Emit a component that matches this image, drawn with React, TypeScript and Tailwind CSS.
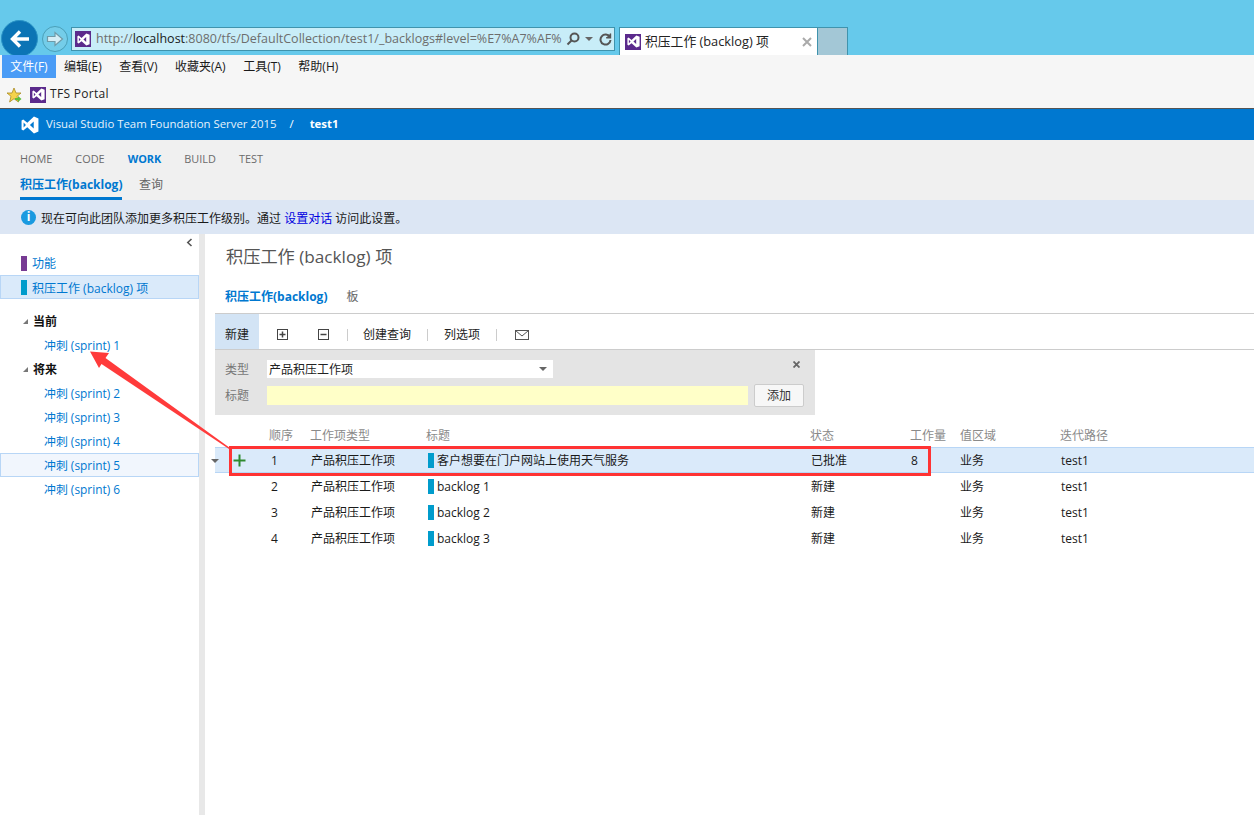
import React from "react";

const font = { fontFamily: '"Open Sans","Noto Sans CJK SC",sans-serif' };

function VsLogo({ color = "#fff", size = 16 }: { color?: string; size?: number }) {
  return (
    <svg width={size} height={size} viewBox="0 0 16 16" className="shrink-0">
      <path
        fill={color}
        fillRule="evenodd"
        d="M11.5 0.5 L15.5 2.2 V13.8 L11.5 15.5 L5.6 10 L2 12.8 L0.5 12 V4 L2 3.2 L5.6 6 Z M11.3 4.8 L7.9 8 L11.3 11.2 Z M2.3 5.8 V10.2 L4.4 8 Z"
      />
    </svg>
  );
}

function VsBadge() {
  return (
    <div className="w-[16px] h-[16px] bg-[#5b2a8c] flex items-center justify-center shrink-0">
      <VsLogo size={13} />
    </div>
  );
}

function Caret({ className = "" }: { className?: string }) {
  return <div className={"w-0 h-0 border-x-[4px] border-x-transparent border-t-[4px] border-t-[#666] " + className} />;
}

function BrowserBar() {
  return (
    <div className="h-[55px] bg-[#66c9eb] flex items-end pl-[1px] overflow-hidden">
      <div className="w-[37px] h-[35px] overflow-hidden shrink-0">
        <div className="w-[37px] h-[37px] rounded-full bg-[#0b74b5] border border-[#2a93c5] flex items-center justify-center">
          <svg width="24" height="24" viewBox="0 0 24 24" fill="none" stroke="#fff" strokeWidth="3.4">
            <path d="M21 12H5M12 4.5L4.5 12L12 19.5" />
          </svg>
        </div>
      </div>
      <div className="w-[26px] h-[26px] rounded-full border border-[#4a9fb8] bg-[#74cde9] flex items-center justify-center ml-[4px] mb-[3px] shrink-0">
        <svg width="20" height="20" viewBox="0 0 20 20">
          <path d="M2.5 7.5H10V3.5L17.5 10L10 16.5V12.5H2.5Z" stroke="#6f9aa8" strokeWidth="1.2" fill="#d5eef6" />
        </svg>
      </div>
      <div className="w-[544px] h-[24px] ml-[3px] mb-[4px] bg-[#c8edf8] border border-[#3f93ad] flex items-center pl-[3px] shrink-0">
        <VsBadge />
        <div className="ml-[5px] w-[466px] overflow-hidden whitespace-nowrap text-[12.5px] text-[#6d6d6d] leading-[20px]">
          http://<span className="text-[#1a1a1a]">localhost</span>:8080/tfs/DefaultCollection/test1/_backlogs#level=%E7%A7%AF%
        </div>
        <svg width="14" height="14" viewBox="0 0 14 14" fill="none" stroke="#555" strokeWidth="2" className="ml-[4px]">
          <circle cx="8.5" cy="5.5" r="4" />
          <path d="M5.5 8.5L1.5 12.5" />
        </svg>
        <Caret className="ml-[5px]" />
        <svg width="13" height="13" viewBox="0 0 13 13" fill="none" stroke="#555" strokeWidth="2" className="ml-[6px]">
          <path d="M10.8 4A5 5 0 1 0 11.5 7" />
          <path d="M11.5 0.5V4.8H7.2" strokeWidth="1.4" fill="#555" />
        </svg>
      </div>
      <div className="w-[199px] h-[28px] ml-[4px] bg-white border-x border-t border-[#3f93ad] border-b-0 flex items-center pl-[5px] shrink-0">
        <VsBadge />
        <span className="ml-[4px] text-[12.8px] text-[#222] whitespace-nowrap">积压工作 (backlog) 项</span>
        <svg width="10" height="10" viewBox="0 0 10 10" stroke="#aaa" strokeWidth="2" className="ml-auto mr-[5px]">
          <path d="M1 1L9 9M9 1L1 9" />
        </svg>
      </div>
      <div className="w-[30px] h-[28px] bg-[#a3c7d6] border-y border-r border-[#3f93ad] border-b-0 shrink-0" />
    </div>
  );
}

function MenuBar() {
  const items = ["编辑(E)", "查看(V)", "收藏夹(A)", "工具(T)", "帮助(H)"];
  return (
    <div className="h-[26px] bg-[#f6f6f6] flex items-start pl-[2px] text-[12px] text-[#1a1a1a]">
      <div className="w-[54px] h-[23px] bg-[#4a9cf6] text-white flex items-center justify-center">文件(F)</div>
      <div className="flex items-center h-[23px] ml-[8px] gap-[17.5px]">
        {items.map((t) => (
          <span key={t} className="whitespace-nowrap">{t}</span>
        ))}
      </div>
    </div>
  );
}

function FavBar() {
  return (
    <div className="h-[27px] bg-[#f6f6f6] border-b border-[#555] flex items-center pl-[6px] box-content">
      <svg width="16" height="16" viewBox="0 0 16 16" className="shrink-0">
        <path d="M8 1L10 6H15L11 9.3L12.4 15L8 11.7L3.6 15L5 9.3L1 6H6Z" fill="#f4d34c" stroke="#a98a22" strokeWidth="0.8" />
        <path d="M9 11H12V9L15.5 12L12 15V13H9Z" fill="#5fbe3a" />
      </svg>
      <div className="ml-[8px]"><VsBadge /></div>
      <span className="ml-[4px] pb-[2px] text-[12px] text-[#222] tracking-[0.3px]">TFS Portal</span>
    </div>
  );
}

function TopBlue() {
  return (
    <div className="h-[31px] bg-[#0078d0] flex items-center pl-[21px] text-white text-[11.4px]">
      <VsLogo size={18} />
      <span className="ml-[7px] pb-[2px] text-[#e6f2fb]">Visual Studio Team Foundation Server 2015</span>
      <span className="ml-[13px] pb-[2px]">/</span>
      <span className="ml-[16px] pb-[2px] font-bold">test1</span>
    </div>
  );
}

function NavArea() {
  return (
    <div className="h-[60px] bg-[#f0f0f0] pl-[20px]">
      <div className="flex gap-[23px] pt-[11px] text-[10.9px] leading-[15px] text-[#6b6b6b]">
        <span>HOME</span>
        <span>CODE</span>
        <span className="font-bold text-[#0078d0]">WORK</span>
        <span>BUILD</span>
        <span>TEST</span>
      </div>
      <div className="flex mt-[10px] text-[12px] leading-[18px] items-start">
        <div className="w-[102px] h-[24px] border-b-[3px] border-[#0078d0] font-bold text-[#0078d0] whitespace-nowrap">积压工作(backlog)</div>
        <span className="ml-[17px] text-[#666]">查询</span>
      </div>
    </div>
  );
}

function InfoBar() {
  return (
    <div className="h-[34px] bg-[#dce6f4] flex items-center pl-[21px] text-[12px] text-[#1a1a1a]">
      <div className="w-[15px] h-[15px] rounded-full bg-[#1a9ae0] text-white flex items-center justify-center text-[12px] font-bold leading-none shrink-0">i</div>
      <span className="ml-[5px] pt-[3px] whitespace-nowrap">
        现在可向此团队添加更多积压工作级别。通过 <span className="text-[#0000e0]">设置对话</span> 访问此设置。
      </span>
    </div>
  );
}

function SprintRow({ n, hl }: { n: number; hl?: boolean }) {
  return (
    <div className={"h-[24px] flex items-center pl-[44px] text-[11.9px] text-[#0078d0] " + (hl ? "bg-[#f1f6fd] border border-[#b8d6f6]" : "")}>
      <span className={"pt-[2px] " + (hl ? "-ml-[1px]" : "")}>冲刺 (sprint) {n}</span>
    </div>
  );
}

function Group({ label }: { label: string }) {
  return (
    <div className="h-[24px] flex items-center pl-[23px] text-[12px] font-bold text-[#111]">
      <div className="w-0 h-0 border-l-[5px] border-l-transparent border-b-[5px] border-b-[#777] mr-[5px]" />
      <span className="pt-[2px]">{label}</span>
    </div>
  );
}

function Sidebar() {
  return (
    <div className="w-[205px] shrink-0 bg-white border-r-[6px] border-[#e8e8e8] flex flex-col">
      <div className="h-[17px] flex justify-end items-center pr-[6px]">
        <svg width="7" height="9" viewBox="0 0 7 9" fill="none" stroke="#555" strokeWidth="1.6"><path d="M5.5 1L1.8 4.5L5.5 8" /></svg>
      </div>
      <div className="h-[24px] flex items-center pl-[21px] text-[12px] text-[#0078d0]">
        <div className="w-[6px] h-[15px] bg-[#773b93] mr-[5px]" /><span className="pt-[2px]">功能</span>
      </div>
      <div className="h-[24px] flex items-center pl-[21px] text-[12px] text-[#0078d0] bg-[#daeafa] border border-[#b8d6f6]">
        <div className="w-[6px] h-[15px] bg-[#009ccc] mr-[5px] -ml-[1px]" /><span className="pt-[3px]">积压工作 (backlog) 项</span>
      </div>
      <div className="h-[10px]" />
      <Group label="当前" />
      <SprintRow n={1} />
      <Group label="将来" />
      {[2, 3, 4].map((n) => <SprintRow key={n} n={n} />)}
      <SprintRow n={5} hl />
      <SprintRow n={6} />
    </div>
  );
}

function Toolbar() {
  const Sep = () => <div className="w-px h-[12px] bg-[#ccc]" />;
  return (
    <div className="h-[37px] border-y border-[#ccc] flex items-center pt-[6px] text-[12px] text-[#222]">
      <div className="w-[44px] h-[35px] -mt-[6px] pt-[6px] bg-[#d3e4f5] flex items-center justify-center">新建</div>
      <svg width="11" height="11" viewBox="0 0 11 11" className="ml-[18px]" fill="none" stroke="#444"><rect x="0.5" y="0.5" width="10" height="10" /><path d="M2.5 5.5H8.5M5.5 2.5V8.5" strokeWidth="1.5" /></svg>
      <svg width="11" height="11" viewBox="0 0 11 11" className="ml-[30px]" fill="none" stroke="#444"><rect x="0.5" y="0.5" width="10" height="10" /><path d="M2.5 5.5H8.5" strokeWidth="1.5" /></svg>
      <div className="ml-[18px]"><Sep /></div>
      <span className="ml-[15px]">创建查询</span>
      <div className="ml-[16px]"><Sep /></div>
      <span className="ml-[16px]">列选项</span>
      <div className="ml-[16px]"><Sep /></div>
      <svg width="14" height="10" viewBox="0 0 14 10" className="ml-[18px]" fill="none" stroke="#555"><rect x="0.5" y="0.5" width="13" height="9" /><path d="M0.5 0.5L7 6L13.5 0.5" /></svg>
    </div>
  );
}

function AddForm() {
  return (
    <div className="w-[600px] h-[65px] bg-[#e4e4e4] relative text-[12px]">
      <div className="flex items-center h-[18px] absolute left-[10px] top-[10px]">
        <span className="w-[42px] text-[#777] pt-[2px]">类型</span>
        <div className="w-[286px] h-[18px] bg-white flex items-center pl-[3px] text-[#222]">
          <span className="pt-[2px] -ml-[1px]">产品积压工作项</span>
          <Caret className="ml-auto mr-[6px]" />
        </div>
      </div>
      <svg width="7" height="7" viewBox="0 0 7 7" stroke="#666" strokeWidth="1.8" className="absolute left-[578px] top-[11px]"><path d="M0.5 0.5L6.5 6.5M6.5 0.5L0.5 6.5" /></svg>
      <div className="flex items-center absolute left-[10px] top-[34px]">
        <span className="w-[42px] text-[#777]">标题</span>
        <div className="w-[481px] h-[19px] bg-[#ffffc8]" />
        <div className="w-[50px] h-[23px] ml-[6px] bg-[#f7f7f7] border border-[#ccc] rounded-[2px] flex items-center justify-center text-[#333]">添加</div>
      </div>
    </div>
  );
}

const cols = "grid grid-cols-[54px_41px_116px_384px_100px_50px_100px_1fr]";

function Row({ n, title, state, work, sel }: { n: number; title: string; state: string; work?: string; sel?: boolean }) {
  return (
    <div className={cols + " h-[26px] items-center text-[12px] text-[#1a1a1a] pt-[2px] " + (sel ? "bg-[#daeafa] border-y border-[#b8d6f6]" : "")}>
      <div />
      <div className="pl-[2px]">{n}</div>
      <div className="pl-[1px] whitespace-nowrap">产品积压工作项</div>
      <div className="flex items-center pl-[2px]">
        <div className="w-[6px] h-[15px] -mt-[2px] bg-[#009ccc] mr-[3px]" />
        {title}
      </div>
      <div className="pl-[1px]">{state}</div>
      <div className="pl-[1px]">{work}</div>
      <div>业务</div>
      <div className="pl-[1px]">test1</div>
    </div>
  );
}

function Main() {
  return (
    <div className="flex-1 bg-white pl-[10px] relative">
      <div className="pl-[11px] pt-[10px] text-[17.2px] leading-[26px] text-[#555] whitespace-nowrap">积压工作 (backlog) 项</div>
      <div className="flex items-center pl-[10px] mt-[17px] h-[20px] text-[12px]">
        <span className="font-bold text-[#0078d0] whitespace-nowrap">积压工作(backlog)</span>
        <span className="ml-[19px] text-[#666]">板</span>
      </div>
      <div className="h-[6px]" />
      <Toolbar />
      <AddForm />
      <div className={cols + " h-[32px] pt-[13px] text-[12px] leading-[16px] text-[#8a8a8a] items-start"}>
        <div />
        <div>顺序</div>
        <div>工作项类型</div>
        <div>标题</div>
        <div>状态</div>
        <div>工作量</div>
        <div>值区域</div>
        <div>迭代路径</div>
      </div>
      <Row n={1} title="客户想要在门户网站上使用天气服务" state="已批准" work="8" sel />
      <Row n={2} title="backlog 1" state="新建" />
      <Row n={3} title="backlog 2" state="新建" />
      <Row n={4} title="backlog 3" state="新建" />
      <Caret className="absolute left-[6px] top-[225px]" />
      <svg width="13" height="13" viewBox="0 0 13 13" className="absolute left-[28px] top-[220px]" stroke="#2f8a2f" strokeWidth="2"><path d="M6.5 0.5V12.5M0.5 6.5H12.5" /></svg>
    </div>
  );
}

export default function App() {
  return (
    <div className="w-[1254px] h-[815px] overflow-hidden relative bg-white flex flex-col" style={font}>
      <BrowserBar />
      <MenuBar />
      <FavBar />
      <TopBlue />
      <NavArea />
      <InfoBar />
      <div className="flex flex-1 min-h-0">
        <Sidebar />
        <Main />
      </div>
      <div className="absolute left-[229px] top-[446px] w-[702px] h-[30px] border-[3px] border-[#ff3333]" />
      <svg width="160" height="110" viewBox="0 0 160 110" className="absolute left-[80px] top-[345px]">
        <path fill="#ff3b3b" d="M10 6.5 L29 8 L25.5 13 L150 103 L149 104 L21.5 19 L19 23 Z" />
      </svg>
    </div>
  );
}
